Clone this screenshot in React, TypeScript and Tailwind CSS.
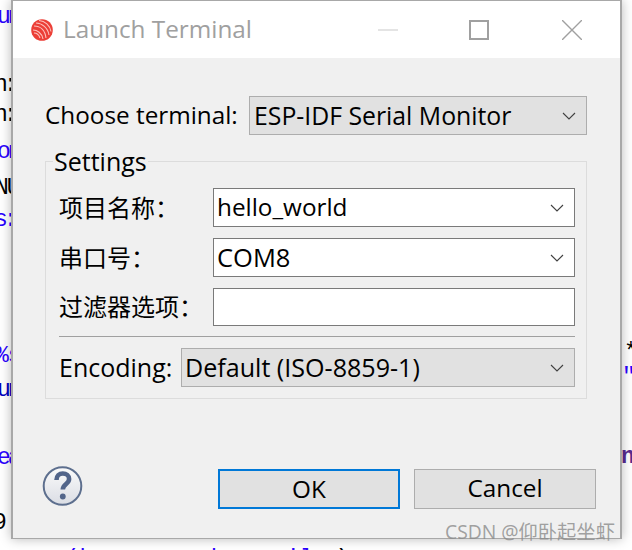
import { ReactNode } from 'react';

const uiFont = "font-['Open_Sans','Noto_Sans_CJK_SC',sans-serif]";

function Chevron() {
  return (
    <svg width="14" height="8" viewBox="0 0 14 8" fill="none" stroke="#404040" strokeWidth="1.1">
      <path d="M1 1l6 6 6-6" />
    </svg>
  );
}

function EspLogo() {
  return (
    <svg className="blur-[0.5px]" width="22" height="22" viewBox="0 0 22 22">
      <circle cx="11" cy="11" r="10.8" fill="#ec3f37" />
      <g fill="none" stroke="#ffd9d5" strokeWidth="1.1" opacity="0.85">
        <path d="M8 1.500c6 .5 11 5 12 11" />
        <path d="M5 4c6 0 12 5 13 12" />
        <path d="M3 7c6 0 11 4 12 12" />
        <path d="M2 11c4 0 9 3 10 9" />
        <path d="M3 14c3 0 5 2 6 5" />
      </g>
    </svg>
  );
}

function HelpIcon() {
  return (
    <svg className="mb-[5px] ml-[-3px]" width="41" height="40" viewBox="0 0 41 40">
      <defs>
        <linearGradient id="helpFill" x1="0" y1="0" x2="0" y2="1">
          <stop offset="0" stopColor="#fbfbfb" />
          <stop offset="1" stopColor="#dadde4" />
        </linearGradient>
      </defs>
      <circle cx="20.500" cy="20" r="18.800" fill="url(#helpFill)" stroke="#5d6f8e" strokeWidth="2" />
      <path d="M14.500 14c0-4 2.800-6.500 6.300-6.500s6.300 2.200 6.300 5.600c0 4.900-6.300 4.900-6.300 10.400" fill="none" stroke="#52658a" strokeWidth="4.600" />
      <circle cx="20.800" cy="30.500" r="2.900" fill="#52658a" />
    </svg>
  );
}

function Combo({ children, className }: { children: ReactNode; className: string }) {
  return (
    <div className={`flex items-center justify-between border pr-[10px] ${className}`}>
      <span className="whitespace-nowrap">{children}</span>
      <Chevron />
    </div>
  );
}

function Row({ label, children }: { label: string; children: ReactNode }) {
  return (
    <div className="flex items-center">
      <span className="w-[154px] whitespace-nowrap text-[24px]">{label}</span>
      <div className="flex-1">{children}</div>
    </div>
  );
}

function Fragment({ className, children }: { className: string; children: ReactNode }) {
  return <span className={`absolute whitespace-pre font-['Liberation_Mono',monospace] text-[23px] leading-none ${className}`}>{children}</span>;
}

export default function App() {
  return (
    <div className={`relative h-[550px] w-[632px] overflow-hidden bg-white text-[24.300px] text-black ${uiFont}`}>
      {/* editor text peeking out behind the dialog */}
      <Fragment className="left-[-3px] top-[6px] tracking-[-3px] text-[#2a00ff]">un</Fragment>
      <Fragment className="left-[-6px] top-[74px] tracking-[-4px]">n:</Fragment>
      <Fragment className="left-[-6px] top-[104px] tracking-[-4px]">n:</Fragment>
      <Fragment className="left-[-3px] top-[141px] tracking-[-3px] text-[#2a00ff]">on</Fragment>
      <Fragment className="left-[-5px] top-[177px] tracking-[-2px]">NU</Fragment>
      <Fragment className="left-[-6px] top-[209px] tracking-[-4px] text-[#2a00ff]">s:</Fragment>
      <Fragment className="left-[-5px] top-[345px] tracking-[-1px] text-[#2a00ff]">%s</Fragment>
      <Fragment className="left-[-3px] top-[379px] tracking-[-3px] text-[#0000c0]">un</Fragment>
      <Fragment className="left-[-3px] top-[447px] tracking-[-3px] text-[#2a00ff]">ea</Fragment>
      <Fragment className="left-[-7px] top-[512px]">9</Fragment>
      <Fragment className="left-[10px] top-[549px] text-[#2a00ff]">t  %(k        d     il</Fragment>
      <Fragment className="left-[322px] top-[549px]">t)</Fragment>
      <Fragment className="left-[624px] top-[342px]">*</Fragment>
      <Fragment className="left-[622px] top-[367px] text-[#2a00ff]">"</Fragment>
      <Fragment className="left-[621px] top-[446px] font-bold text-[#5a2a90]">n</Fragment>

      <div className="absolute left-[11px] top-0 flex h-[539px] w-[611px] flex-col border-x-2 border-y border-[#a8a8a8] bg-[#f0f0f0] shadow-[0_0_11px_rgba(0,0,0,0.28)]">
        <div className="flex h-[57px] shrink-0 items-center bg-white pl-[18px]">
          <EspLogo />
          <span className="ml-[10px] text-[24.300px] text-[#a0a0a0]">Launch Terminal</span>
          <div className="ml-auto flex items-center">
            <div className="h-[2px] w-5 bg-[#e4e4e4]" />
            <div className="ml-[71px] h-5 w-5 border-2 border-[#a0a0a0]" />
            <svg className="ml-[73px] mr-[38px]" width="20" height="20" viewBox="0 0 20 20" stroke="#a0a0a0" strokeWidth="1.400">
              <path d="M0 0l20 20M20 0L0 20" />
            </svg>
          </div>
        </div>

        <div className="flex flex-1 flex-col pl-[32px] pr-[33px] pt-[38px]">
          <div className="flex items-center">
            <span className="w-[204px] whitespace-nowrap">Choose terminal:</span>
            <Combo className="h-[39px] flex-1 border-[#adadad] bg-[#e1e1e1] pl-1 text-[24.800px]">ESP-IDF Serial Monitor</Combo>
          </div>

          <div className="relative mt-[26px] flex h-[238px] flex-col gap-[11px] border border-[#dcdcdc] pl-[13px] pr-[11px] pt-[26px]">
            <span className="absolute left-[7px] top-[-17px] bg-[#f0f0f0] px-px text-[25px] leading-[32px]">Settings</span>
            <Row label="项目名称：">
              <Combo className="h-[39px] border-[#7a7a7a] bg-white pl-[3px]">hello_world</Combo>
            </Row>
            <Row label="串口号：">
              <Combo className="h-[39px] border-[#7a7a7a] bg-white pl-[3px] text-[25.500px]">COM8</Combo>
            </Row>
            <Row label="过滤器选项：">
              <div className="h-[38px] border border-[#7a7a7a] bg-white" />
            </Row>
            <div className="-mt-px h-px bg-[#a0a0a0]" />
            <div className="flex items-center">
              <span className="w-[122px] whitespace-nowrap text-[25px]">Encoding:</span>
              <Combo className="h-[39px] flex-1 border-[#adadad] bg-[#e1e1e1] pl-[3px] text-[25.100px]">Default (ISO-8859-1)</Combo>
            </div>
          </div>

          <div className="mt-[67px] flex items-center">
            <HelpIcon />
            <button className="ml-[135px] h-[40px] w-[182px] border-2 border-[#0078d7] bg-[#e1e1e1]">OK</button>
            <button className="ml-[14px] mr-[-9px] h-[40px] w-[182px] border border-[#adadad] bg-[#e1e1e1]">Cancel</button>
          </div>
        </div>
      </div>

      <span className="absolute left-[445px] top-[518px] whitespace-nowrap text-[19.300px] text-[#8a8a8a]/80">CSDN @仰卧起坐虾</span>
    </div>
  );
}
